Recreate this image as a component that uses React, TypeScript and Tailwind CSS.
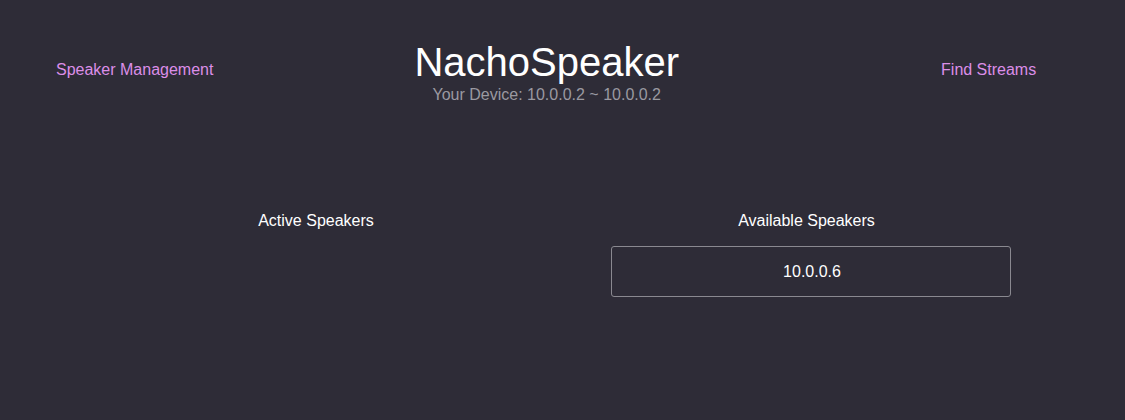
export default function App() {
  return (
    <div className="min-h-[420px] w-full bg-[#2e2c37] font-['Liberation_Sans',Arial,sans-serif] text-white">
      {/* Header */}
      <header className="flex items-start pt-[39px]">
        <a href="#" className="ml-[56px] mt-[21px] text-base leading-5 text-[#dc8ee8]">
          Speaker Management
        </a>
        <div className="ml-[201px] flex flex-col items-center">
          <h1 className="text-[40px] leading-[46px]">NachoSpeaker</h1>
          <p className="text-base leading-5 text-[#9a99a1]">
            Your Device: 10.0.0.2 ~ 10.0.0.2
          </p>
        </div>
        <a href="#" className="ml-[262px] mt-[21px] text-base leading-5 text-[#dc8ee8]">
          Find Streams
        </a>
      </header>

      {/* Speaker lists */}
      <main className="mt-[106px] flex justify-center gap-[95px] pl-[2px]">
        <section className="flex w-[400px] flex-col items-center">
          <h2 className="text-base leading-5">Active Speakers</h2>
        </section>
        <section className="flex w-[400px] flex-col items-center">
          <h2 className="pr-[9px] text-base leading-5">Available Speakers</h2>
          <ul className="mt-[15px] w-full">
            <li className="flex h-[51px] w-full items-center justify-center rounded-[3px] border border-[#8a8990] pl-[2px] text-base">
              10.0.0.6
            </li>
          </ul>
        </section>
      </main>
    </div>
  );
}
